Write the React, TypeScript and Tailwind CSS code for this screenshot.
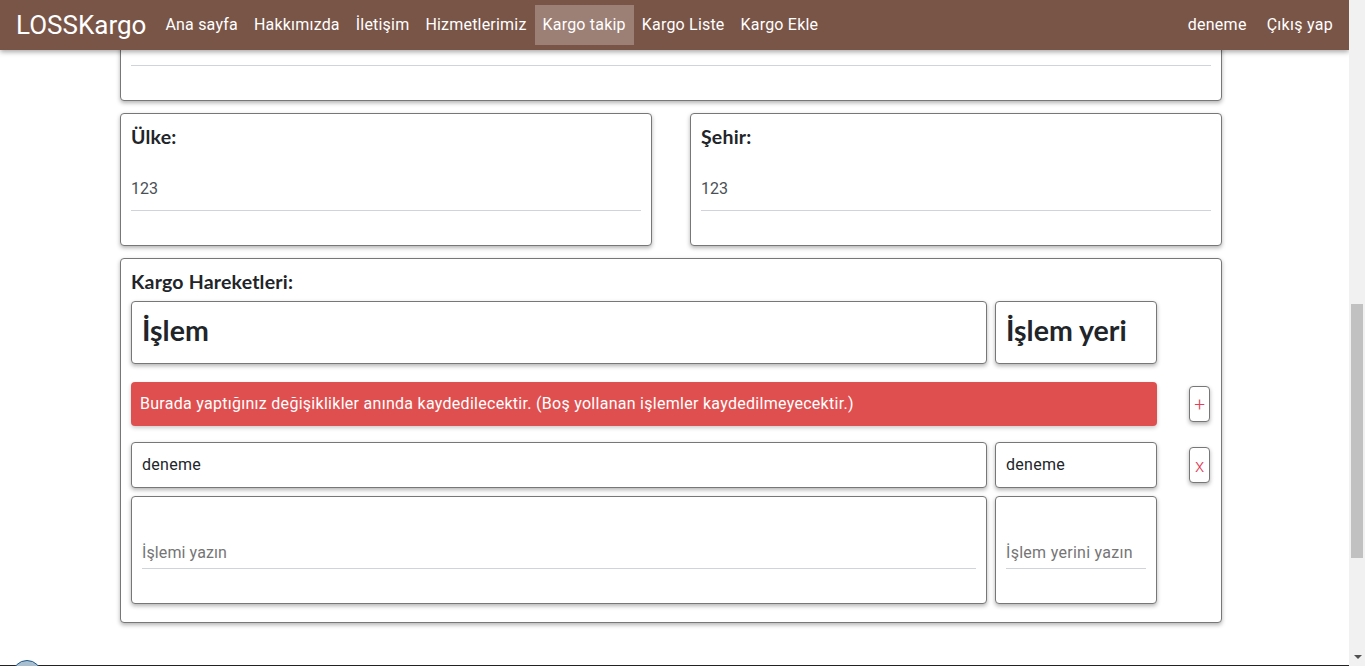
const navLinks = ['Ana sayfa', 'Hakkımızda', 'İletişim', 'Hizmetlerimiz', 'Kargo takip', 'Kargo Liste', 'Kargo Ekle'];

const boxCls = 'bg-white border border-[#777] rounded-[4px] shadow-[0_2px_4px_rgba(0,0,0,0.3)]';

function FieldCard({ label, value }: { label: string; value: string }) {
  return (
    <div className={`${boxCls} w-[532px] h-[133px] px-[10px] pt-[10px]`}>
      <div className="font-['Lato'] font-bold text-[19.5px] tracking-[0.2px] leading-[26px] text-[#212529]">{label}</div>
      <div className="mt-[26px] h-[35px] border-b border-[#ced4da] text-[16px] leading-[25px] text-[#495057]">{value}</div>
    </div>
  );
}

function SideButton({ label }: { label: string }) {
  return (
    <button className={`${boxCls} w-[21px] h-[36px] ml-[32px] text-[#e0405a] text-[19px] font-light leading-none`}>{label}</button>
  );
}

export default function App() {
  return (
    <div className="h-[666px] w-[1365px] overflow-hidden flex bg-white font-['Roboto',sans-serif]">
      <div className="relative w-[1349px] h-[666px] overflow-hidden">
        {/* Navbar */}
        <nav className="absolute top-0 left-0 right-0 z-10 h-[50px] bg-[#795548] shadow-[0_2px_5px_rgba(0,0,0,0.35)] flex items-center pl-[16px] pr-[8px] text-white">
          <span className="text-[26px] leading-none mr-[11px]">LOSSKargo</span>
          {navLinks.map(l => (
            <a
              key={l}
              className={`h-[40px] px-[8px] flex items-center text-[16px] tracking-[0.2px] ${l === 'Kargo takip' ? 'bg-[#9c8075]' : ''}`}
            >
              {l}
            </a>
          ))}
          <div className="ml-auto flex">
            <a className="h-[40px] px-[8px] mr-[4px] flex items-center text-[16px] tracking-[0.28px]">deneme</a>
            <a className="h-[40px] px-[8px] flex items-center text-[16px] tracking-[0.28px]">Çıkış yap</a>
          </div>
        </nav>

        {/* Content, scrolled */}
        <main className="pt-[40px] pl-[120px] w-[1222px]">
          <div className={`${boxCls} h-[61px] px-[10px] pt-[24px]`}>
            <div className="border-b border-[#ced4da]" />
          </div>

          <div className="mt-[12px] flex justify-between">
            <FieldCard label="Ülke:" value="123" />
            <FieldCard label="Şehir:" value="123" />
          </div>

          <div className={`${boxCls} mt-[12px] h-[365px] px-[10px] pt-[10px]`}>
            <div className="font-['Lato'] font-bold text-[19.5px] tracking-[0.2px] leading-[26px] text-[#212529]">Kargo Hareketleri:</div>

            <div className="mt-[6px] flex gap-[8px]">
              <div className={`${boxCls} w-[856px] h-[63px] px-[10px] pt-[10px] font-['Lato'] font-bold text-[28.5px] leading-[36px] text-[#212529]`}>İşlem</div>
              <div className={`${boxCls} w-[162px] h-[63px] px-[10px] pt-[10px] font-['Lato'] font-bold text-[28.5px] leading-[36px] whitespace-nowrap text-[#212529]`}>İşlem yeri</div>
            </div>

            <div className="mt-[18px] flex items-center">
              <div className="w-[1026px] h-[44px] bg-[#e04f4f] rounded-[4px] shadow-[0_2px_4px_rgba(0,0,0,0.2)] px-[9px] flex items-center text-white text-[16px] tracking-[0.28px]">
                Burada yaptığınız değişiklikler anında kaydedilecektir. (Boş yollanan işlemler kaydedilmeyecektir.)
              </div>
              <SideButton label="+" />
            </div>

            <div className="mt-[16px] flex gap-[8px] items-start">
              <div className={`${boxCls} w-[856px] h-[46px] px-[10px] flex items-center text-[16px] tracking-[0.28px] text-[#212529]`}>deneme</div>
              <div className={`${boxCls} w-[162px] h-[46px] px-[10px] flex items-center text-[16px] tracking-[0.28px] text-[#212529]`}>deneme</div>
              <div className="pt-[5px] -ml-[8px]"><SideButton label="x" /></div>
            </div>

            <div className="mt-[8px] flex gap-[8px]">
              <div className={`${boxCls} w-[856px] h-[108px] px-[10px] pt-[43px]`}>
                <div className="h-[29px] border-b border-[#ced4da] text-[16px] tracking-[0.1px] leading-[26px] text-[#757575]">İşlemi yazın</div>
              </div>
              <div className={`${boxCls} w-[162px] h-[108px] px-[10px] pt-[43px]`}>
                <div className="h-[29px] border-b border-[#ced4da] text-[16px] tracking-[0.28px] leading-[26px] whitespace-nowrap text-[#757575]">İşlem yerini yazın</div>
              </div>
            </div>
          </div>
        </main>

        {/* Footer edge */}
        <div className="absolute left-0 right-0 bottom-0 h-[1px] bg-[#222]" />
        <div className="absolute left-[12px] top-[660px] w-[30px] h-[30px] rounded-full border border-[#1d5a8a] bg-[#a9bfd0]" />
      </div>

      {/* Scrollbar */}
      <div className="relative w-[16px] h-[666px] bg-[#f1f1f1]">
        <div className="absolute left-[2px] top-[304px] w-[12px] h-[254px] bg-[#c1c1c1]" />
        <div className="absolute left-[5px] bottom-[7px] w-0 h-0 border-x-[4px] border-x-transparent border-t-[4px] border-t-[#505050]" />
      </div>
    </div>
  );
}
